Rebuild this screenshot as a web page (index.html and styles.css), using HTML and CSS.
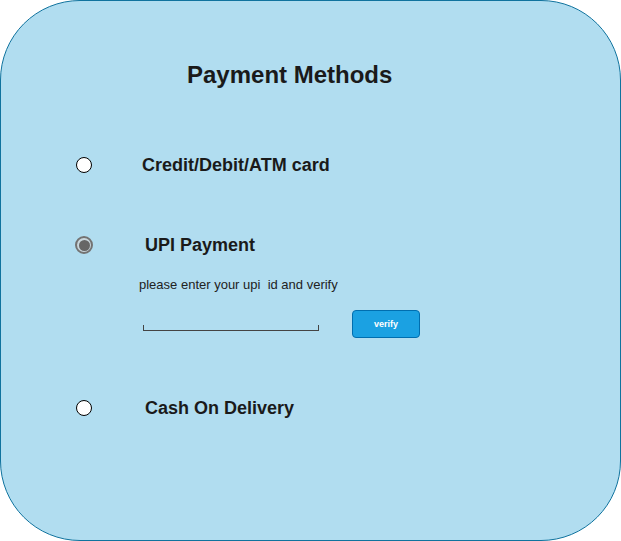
FILE: index.html
```html
<!DOCTYPE html>
<html>
<head>
<meta charset="utf-8">
<link rel="stylesheet" href="styles.css">
</head>
<body>
<div class="card">
  <h1 class="title">Payment Methods</h1>
  <div class="option option-first">
    <span class="radio"></span>
    <span class="label label-credit">Credit/Debit/ATM card</span>
  </div>
  <div class="option option-upi">
    <span class="radio radio-checked"><span class="dot"></span></span>
    <span class="label">UPI Payment</span>
  </div>
  <p class="hint">please enter your upi&nbsp; id and verify</p>
  <div class="upi-row">
    <div class="upi-input"></div>
    <button class="verify">verify</button>
  </div>
  <div class="option option-cod">
    <span class="radio"></span>
    <span class="label">Cash On Delivery</span>
  </div>
</div>
</body>
</html>
```
FILE: styles.css
```css
html, body {
  margin: 0;
  padding: 0;
  background: #ffffff;
}

body {
  font-family: "Liberation Sans", Arial, sans-serif;
  color: #1a1a1a;
}

.card {
  box-sizing: border-box;
  width: 621px;
  height: 541px;
  border: 1px solid #10739e;
  border-radius: 80px;
  background: #b1ddf0;
  padding-top: 60px;
  display: flex;
  flex-direction: column;
}

.title {
  margin: 0 0 0 186px;
  font-size: 24px;
  line-height: 28px;
  font-weight: bold;
  color: #1a1a1a;
}

.option {
  display: flex;
  align-items: center;
  height: 20px;
  padding-left: 75px;
}

.option-first { margin-top: 66px; }
.option-upi { margin-top: 60px; }
.option-cod { margin-top: 60px; }

.radio {
  box-sizing: border-box;
  width: 16px;
  height: 16px;
  border-radius: 50%;
  border: 1px solid #000;
  background: #fff;
  flex: none;
  display: flex;
  align-items: center;
  justify-content: center;
}

.radio-checked {
  width: 18px;
  height: 18px;
  margin-left: -1px;
  border: 2px solid #737373;
  background: #c9d6dc;
}

.dot {
  width: 11px;
  height: 11px;
  border-radius: 50%;
  background: #666666;
}

.label {
  margin-left: 53px;
  font-size: 18px;
  line-height: 20px;
  font-weight: bold;
  color: #1a1a1a;
  white-space: nowrap;
}

.label-credit { margin-left: 50px; }

.option-upi .label { margin-left: 52px; }

.hint {
  margin: 22px 0 0 138px;
  font-size: 13px;
  line-height: 16px;
  color: #222;
}

.upi-row {
  display: flex;
  align-items: flex-start;
  margin-top: 17px;
  padding-left: 142px;
}

.upi-input {
  box-sizing: border-box;
  width: 176px;
  height: 6px;
  margin-top: 15px;
  border: 1px solid #444;
  border-top: none;
}

.verify {
  box-sizing: border-box;
  width: 68px;
  height: 28px;
  margin-left: 33px;
  padding: 0;
  border: 1px solid #006eaf;
  border-radius: 4px;
  background: #1ba1e2;
  color: #ffffff;
  font-family: "Liberation Sans", Arial, sans-serif;
  font-size: 9px;
  font-weight: bold;
}
```
